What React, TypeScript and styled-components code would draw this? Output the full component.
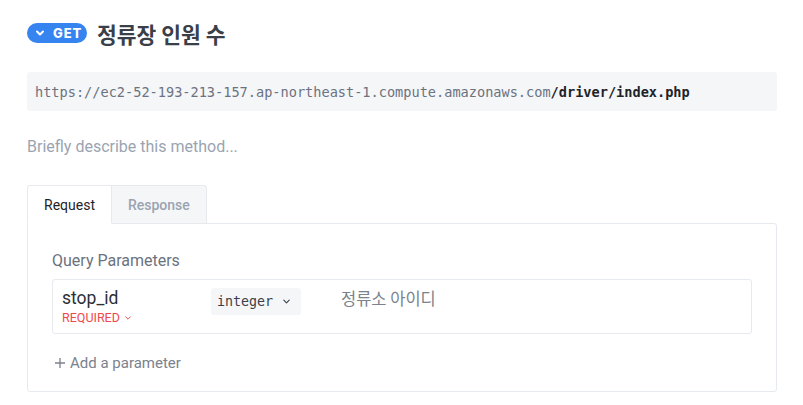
import React from 'react'
import styled, { createGlobalStyle } from 'styled-components'

const GlobalStyle = createGlobalStyle`
  body {
    margin: 0;
    background: #ffffff;
    font-family: Roboto, "Noto Sans CJK KR", sans-serif;
  }
`

const Page = styled.div`
  width: 750px;
  padding: 20px 26px 14px 27px;
`

// Title row
const TitleRow = styled.div`
  display: flex;
  align-items: center;
  gap: 10px;
  height: 26px;
`

const MethodBadge = styled.span`
  display: inline-flex;
  align-items: center;
  gap: 8px;
  height: 20px;
  width: 60px;
  box-sizing: border-box;
  padding: 0 0 0 8px;
  border-radius: 10px;
  background: #3584f0;
  color: #ffffff;
  font-family: Inter, Roboto, sans-serif;
  font-size: 13px;
  font-weight: 800;
  letter-spacing: 0.9px;
`

const Title = styled.h1`
  margin: 0;
  font-family: "Noto Sans CJK KR", sans-serif;
  font-size: 21.5px;
  font-weight: 700;
  color: #3a4049;
`

// Endpoint URL
const UrlBox = styled.div`
  margin-top: 26px;
  height: 39px;
  display: flex;
  align-items: center;
  padding: 0 8px;
  border-radius: 3px;
  background: #f5f6f8;
  font-family: "DejaVu Sans Mono", monospace;
  font-size: 13.6px;
  white-space: nowrap;
`

const UrlHost = styled.span`
  color: #6b7280;
`

const UrlPath = styled.span`
  color: #1f2328;
  font-weight: 700;
`

const Description = styled.div`
  margin-top: 26px;
  font-size: 16px;
  line-height: 20px;
  color: #9aa4b1;
`

// Tabs
const Tabs = styled.div`
  margin-top: 28px;
  display: flex;
`

const Tab = styled.div<{ $active?: boolean }>`
  height: 37px;
  display: flex;
  align-items: center;
  padding: 0 16px;
  border: 1px solid #e6e9ee;
  border-bottom: 1px solid ${(p) => (p.$active ? '#ffffff' : '#e6e9ee')};
  border-left: ${(p) => (p.$active ? '1px solid #e6e9ee' : 'none')};
  border-radius: ${(p) => (p.$active ? '3px 0 0 0' : '0 3px 0 0')};
  background: ${(p) => (p.$active ? '#ffffff' : '#f5f6f8')};
  color: ${(p) => (p.$active ? '#1f2328' : '#9aa4b1')};
  font-size: 14px;
  font-weight: ${(p) => (p.$active ? 400 : 500)};
  margin-bottom: -1px;
  position: relative;
  z-index: 1;
`

const Panel = styled.div`
  border: 1px solid #e6e9ee;
  border-radius: 0 3px 3px 3px;
  padding: 27px 24px 18px 24px;
`

const SectionLabel = styled.div`
  font-size: 16px;
  line-height: 20px;
  color: #6b7280;
`

const ParamRow = styled.div`
  margin-top: 8px;
  height: 55px;
  border: 1px solid #e6e9ee;
  border-radius: 3px;
  display: grid;
  grid-template-columns: 149px 130px 1fr;
  align-items: start;
  padding: 8px 0 0 9px;
  box-sizing: border-box;
`

const ParamName = styled.div`
  display: flex;
  flex-direction: column;
`

const NameText = styled.span`
  font-size: 17.5px;
  color: #2b2f36;
  line-height: 21px;
`

const Required = styled.span`
  display: flex;
  align-items: center;
  gap: 4px;
  margin-top: 2px;
  font-size: 12.5px;
  color: #f0494b;
  line-height: 14px;
`

const TypeSelect = styled.div`
  width: 90px;
  height: 27px;
  box-sizing: border-box;
  display: flex;
  align-items: center;
  gap: 9px;
  padding: 0 6px;
  border-radius: 3px;
  background: #f5f6f8;
  font-family: "DejaVu Sans Mono", monospace;
  font-size: 13.3px;
  color: #3a4049;
`

const ParamDesc = styled.div`
  font-family: "Noto Sans CJK KR", sans-serif;
  font-size: 16.5px;
  color: #7a828d;
  line-height: 21px;
`

const AddParam = styled.div`
  margin-top: 19px;
  margin-left: 2px;
  display: flex;
  align-items: center;
  gap: 4px;
  font-size: 15px;
  line-height: 20px;
  color: #7a828d;
`

const Chevron = ({ size = 8, color = '#fff', width = 1.8 }) => (
  <svg width={size} height={size} viewBox="0 0 10 10">
    <path d="M2 3.5 L5 6.5 L8 3.5" fill="none" stroke={color} strokeWidth={width} strokeLinecap="round" strokeLinejoin="round" />
  </svg>
)

const Plus = () => (
  <svg width="12" height="12" viewBox="0 0 12 12">
    <path d="M6 1 V11 M1 6 H11" stroke="#7a828d" strokeWidth="1.3" />
  </svg>
)

export default function App() {
  return (
    <>
      <GlobalStyle />
      <Page>
        <TitleRow>
          <MethodBadge>
            <Chevron size={10} width={2} />
            GET
          </MethodBadge>
          <Title>정류장 인원 수</Title>
        </TitleRow>
        <UrlBox>
          <UrlHost>https://ec2-52-193-213-157.ap-northeast-1.compute.amazonaws.com</UrlHost>
          <UrlPath>/driver/index.php</UrlPath>
        </UrlBox>
        <Description>Briefly describe this method...</Description>
        <Tabs>
          <Tab $active>Request</Tab>
          <Tab>Response</Tab>
        </Tabs>
        <Panel>
          <SectionLabel>Query Parameters</SectionLabel>
          <ParamRow>
            <ParamName>
              <NameText>stop_id</NameText>
              <Required>
                REQUIRED
                <Chevron size={8} color="#f0494b" width={1.2} />
              </Required>
            </ParamName>
            <TypeSelect>
              integer
              <Chevron size={9} color="#3a4049" width={1.2} />
            </TypeSelect>
            <ParamDesc>정류소 아이디</ParamDesc>
          </ParamRow>
          <AddParam>
            <Plus />
            Add a parameter
          </AddParam>
        </Panel>
      </Page>
    </>
  )
}
